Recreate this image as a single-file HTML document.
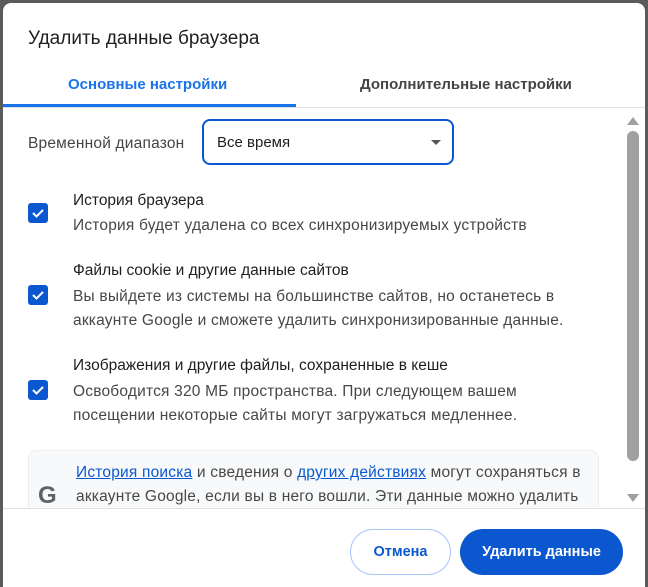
<!DOCTYPE html>
<html><head><meta charset="utf-8"><style>
*{margin:0;padding:0;box-sizing:border-box}
html,body{width:648px;height:587px;overflow:hidden}
body{background:#5b5b5b;font-family:"Liberation Sans",sans-serif;position:relative;color:#1f1f1f}
.dlg{position:absolute;left:3px;top:3px;width:642px;height:584px;background:#fff;border-radius:8px 8px 0 0;overflow:hidden}
.abs{position:absolute;white-space:nowrap}
.title{left:25px;top:25px;font-size:19px;color:#1f1f1f}
.tab{top:73px;font-size:15px;font-weight:bold}
.cb{position:absolute;left:25px;width:20px;height:20px;background:#0b57d0;border-radius:3px}
.cb svg{position:absolute;left:3px;top:4px}
.t1{font-size:15.5px;color:#1f1f1f}
.t2{font-size:15.5px;color:#474747;line-height:24px;letter-spacing:0.2px}
a{color:#0b57d0;text-decoration:underline}
</style></head><body>
<div class="dlg">
<div class="abs title">Удалить данные браузера</div>
<div class="abs tab" style="left:65px;color:#1a73e8">Основные настройки</div>
<div class="abs tab" style="left:357px;color:#444">Дополнительные настройки</div>
<div class="abs" style="left:0;top:101px;width:293px;height:3px;background:#1a73e8"></div>
<div class="abs" style="left:0;top:104px;width:642px;height:1px;background:#e0e0e0"></div>
<div class="abs t2" style="left:25px;top:129px;color:#444">Временной диапазон</div>
<div class="abs" style="left:199px;top:116px;width:252px;height:46px;border:2px solid #0b57d0;border-radius:8px"></div>
<div class="abs t1" style="left:214px;top:131px;font-size:15px">Все время</div>
<div class="abs" style="left:428px;top:137px;width:0;height:0;border-left:5px solid transparent;border-right:5px solid transparent;border-top:5px solid #555"></div>

<div class="cb" style="top:200px"><svg width="14" height="12" viewBox="0 0 14 12"><path d="M2 6l3.5 3.5L12 3" stroke="#fff" stroke-width="2" fill="none"/></svg></div>
<div class="abs t1" style="left:70px;top:189px">История браузера</div>
<div class="abs t2" style="left:70px;top:211px">История будет удалена со всех синхронизируемых устройств</div>

<div class="cb" style="top:282px"><svg width="14" height="12" viewBox="0 0 14 12"><path d="M2 6l3.5 3.5L12 3" stroke="#fff" stroke-width="2" fill="none"/></svg></div>
<div class="abs t1" style="left:70px;top:259px">Файлы cookie и другие данные сайтов</div>
<div class="abs t2" style="left:70px;top:282px">Вы выйдете из системы на большинстве сайтов, но останетесь в<br>аккаунте Google и сможете удалить синхронизированные данные.</div>

<div class="cb" style="top:377px"><svg width="14" height="12" viewBox="0 0 14 12"><path d="M2 6l3.5 3.5L12 3" stroke="#fff" stroke-width="2" fill="none"/></svg></div>
<div class="abs t1" style="left:70px;top:354px">Изображения и другие файлы, сохраненные в кеше</div>
<div class="abs t2" style="left:70px;top:377px">Освободится 320 МБ пространства. При следующем вашем<br>посещении некоторые сайты могут загружаться медленнее.</div>

<div class="abs" style="left:25px;top:447px;width:571px;height:80px;background:#f8f9fa;border:1px solid #eceef0;border-radius:8px"></div>
<div class="abs" style="left:35px;top:479px;font-size:24px;font-weight:bold;color:#5f6368">G</div>
<div class="abs t2" style="left:73px;top:458px">
<a>История поиска</a> и сведения о <a>других действиях</a> могут сохраняться в<br>аккаунте Google, если вы в него вошли. Эти данные можно удалить</div>

<div class="abs" style="left:621px;top:110px;width:18px;height:397px;background:#fff"></div>
<div class="abs" style="left:624px;top:114px;width:0;height:0;border-left:6px solid transparent;border-right:6px solid transparent;border-bottom:8px solid #a0a0a0"></div>
<div class="abs" style="left:624px;top:128px;width:12px;height:330px;background:#a0a0a0;border-radius:6px"></div>
<div class="abs" style="left:624px;top:491px;width:0;height:0;border-left:6px solid transparent;border-right:6px solid transparent;border-top:8px solid #a0a0a0"></div>

<div class="abs" style="left:0;top:505px;width:642px;height:95px;background:#fff;border-top:1px solid #e0e0e0"></div>
<div class="abs" style="left:347px;top:526px;width:101px;height:46px;border:1px solid #a8c7fa;border-radius:23px;color:#0b57d0;font-weight:bold;font-size:14.5px;text-align:center;line-height:44px">Отмена</div>
<div class="abs" style="left:457px;top:526px;width:163px;height:46px;background:#0b57d0;border-radius:23px;color:#fff;font-weight:bold;font-size:14.5px;text-align:center;line-height:46px">Удалить данные</div>
</div>
</body></html>
